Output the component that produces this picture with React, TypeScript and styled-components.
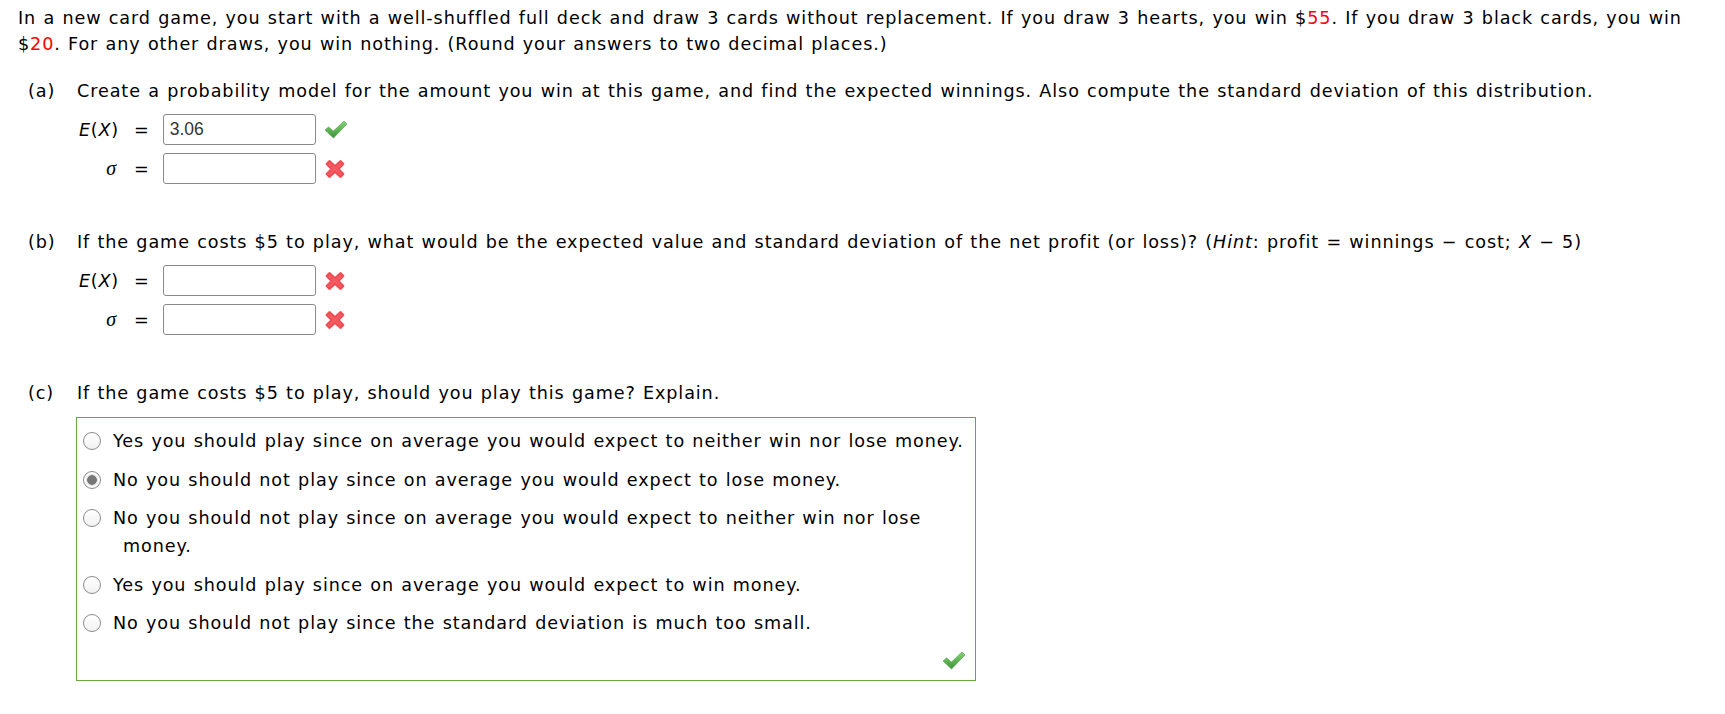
import React from 'react';
import styled, { createGlobalStyle } from 'styled-components';

const GlobalStyle = createGlobalStyle`
  body {
    margin: 0;
    background: #fff;
    color: #000;
    font-family: 'DejaVu Sans', Verdana, sans-serif;
    font-size: 17.6px;
    letter-spacing: 0.9px;
    word-spacing: 0.8px;
  }
`;

const Page = styled.div`
  padding: 5px 18px 0;
  line-height: 26px;
`;

const Intro = styled.p`
  margin: 0;
  white-space: nowrap;
`;

const Red = styled.span`
  color: #f00;
`;

const Part = styled.section`
  margin-top: 21px;

  & + & {
    margin-top: 45px;
  }
`;

const PartHead = styled.div`
  display: flex;
  padding-left: 10px;
`;

const PartLetter = styled.span`
  width: 49px;
  flex: none;
`;

const Answers = styled.div`
  display: flex;
  flex-direction: column;
  gap: 8px;
  margin-top: 10px;
  padding-left: 59px;
`;

const AnswerRow = styled.div`
  display: flex;
  align-items: center;
  height: 31px;
`;

const MathLabel = styled.span`
  width: 42px;
  text-align: right;
  font-style: italic;
  letter-spacing: 0.8px;
`;

const Paren = styled.span`
  font-style: normal;
`;

const Sigma = styled.span`
  font-family: 'Liberation Serif', 'Times New Roman', serif;
  font-style: italic;
  font-size: 20px;
  margin-right: 2px;
`;

const Equals = styled.span`
  margin: 0 13px 0 15px;
`;

const Field = styled.div`
  box-sizing: border-box;
  width: 153px;
  height: 31px;
  border: 1px solid #8a8a8a;
  border-radius: 3px;
  padding: 0 6px;
  font-family: 'Liberation Sans', Arial, sans-serif;
  font-size: 17.5px;
  letter-spacing: 0;
  line-height: 29px;
  color: #333;
`;

const Mark = styled.span`
  display: inline-flex;
  margin-left: 8px;
`;

const Choices = styled.div`
  box-sizing: border-box;
  width: 900px;
  height: 264px;
  margin: 11px 0 0 58px;
  border: 1px solid #6aa741;
  padding: 9px 6px 0;
  display: flex;
  flex-direction: column;
  gap: 10.5px;
  line-height: 28px;
`;

const Choice = styled.label`
  display: flex;
  align-items: flex-start;
`;

const Radio = styled.span<{ $checked?: boolean }>`
  box-sizing: border-box;
  flex: none;
  width: 18px;
  height: 18px;
  margin: 5px 12px 0 0;
  border-radius: 50%;
  border: 1px solid #8c8c8c;
  background: ${p =>
    p.$checked
      ? 'radial-gradient(circle, #777 0 4.5px, #d8d8d8 5px, #fff 6.5px)'
      : 'linear-gradient(#fff, #f2f2f2)'};
`;

const ChoiceText = styled.span`
  padding-left: 10px;
  text-indent: -10px;
`;

const Footer = styled.div`
  margin-top: auto;
  display: flex;
  justify-content: flex-end;
  padding: 0 3px 10px 0;
`;

const Check = () => (
  <svg width="24" height="19" viewBox="0 0 24 19">
    <defs>
      <linearGradient id="ok" x1="0" y1="0" x2="0" y2="1">
        <stop offset="0" stopColor="#86d477" />
        <stop offset="1" stopColor="#3c9637" />
      </linearGradient>
    </defs>
    <path
      d="M1 10 L4.5 7 L9.5 11 L20 1 L23 4 L9.5 18 Z"
      fill="url(#ok)"
      stroke="#4c9c43"
      strokeWidth="0.6"
      strokeLinejoin="round"
    />
  </svg>
);

const Cross = () => (
  <svg width="22" height="20" viewBox="0 0 22 20">
    <path
      d="M2.5 5 L5.5 2 L11 7 L16.5 2 L19.5 5 L14.5 10 L19.5 15 L16.5 18 L11 13 L5.5 18 L2.5 15 L7.5 10 Z"
      fill="#f45b61"
      stroke="#ef4d54"
      strokeWidth="1.8"
      strokeLinejoin="round"
    />
  </svg>
);

const EX = () => (
  <MathLabel>
    E<Paren>(</Paren>X<Paren>)</Paren>
  </MathLabel>
);

const SigmaLabel = () => (
  <MathLabel>
    <Sigma>σ</Sigma>
  </MathLabel>
);

const Answer = ({ label, value, ok }: { label: React.ReactNode; value?: string; ok: boolean }) => (
  <AnswerRow>
    {label}
    <Equals>=</Equals>
    <Field>{value}</Field>
    <Mark>{ok ? <Check /> : <Cross />}</Mark>
  </AnswerRow>
);

const options = [
  'Yes you should play since on average you would expect to neither win nor lose money.',
  'No you should not play since on average you would expect to lose money.',
  'No you should not play since on average you would expect to neither win nor lose money.',
  'Yes you should play since on average you would expect to win money.',
  'No you should not play since the standard deviation is much too small.',
];

export default function App() {
  return (
    <Page>
      <GlobalStyle />
      <Intro>
        In a new card game, you start with a well-shuffled full deck and draw 3 cards without replacement. If you
        draw 3 hearts, you win $<Red>55</Red>. If you draw 3 black cards, you win
        <br />$<Red>20</Red>. For any other draws, you win nothing. (Round your answers to two decimal places.)
      </Intro>

      <Part>
        <PartHead>
          <PartLetter>(a)</PartLetter>
          <span>
            Create a probability model for the amount you win at this game, and find the expected winnings. Also
            compute the standard deviation of this distribution.
          </span>
        </PartHead>
        <Answers>
          <Answer label={<EX />} value="3.06" ok />
          <Answer label={<SigmaLabel />} ok={false} />
        </Answers>
      </Part>

      <Part>
        <PartHead>
          <PartLetter>(b)</PartLetter>
          <span>
            If the game costs $5 to play, what would be the expected value and standard deviation of the net profit
            (or loss)? (<i>Hint</i>: profit = winnings − cost; <i>X</i> − 5)
          </span>
        </PartHead>
        <Answers>
          <Answer label={<EX />} ok={false} />
          <Answer label={<SigmaLabel />} ok={false} />
        </Answers>
      </Part>

      <Part>
        <PartHead>
          <PartLetter>(c)</PartLetter>
          <span>If the game costs $5 to play, should you play this game? Explain.</span>
        </PartHead>
        <Choices>
          {options.map((text, i) => (
            <Choice key={i}>
              <Radio $checked={i === 1} />
              <ChoiceText>{text}</ChoiceText>
            </Choice>
          ))}
          <Footer>
            <Check />
          </Footer>
        </Choices>
      </Part>
    </Page>
  );
}
